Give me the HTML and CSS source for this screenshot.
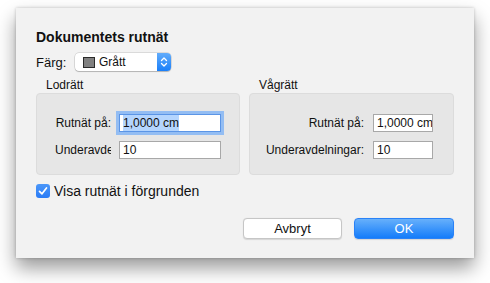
FILE: index.html
```html
<!DOCTYPE html>
<html lang="sv">
<head>
    <meta charset="UTF-8">
    <meta name="viewport" content="width=device-width, initial-scale=1.0">
    <title>Dokumentets rutnät</title>
    <link rel="stylesheet" href="styles.css">
</head>
<body>
    <div class="dialog">
        <h2 class="title">Dokumentets rutnät</h2>

        <!-- Färgval -->
        <div class="color-row">
            <span class="color-label">Färg:</span>
            <div class="popup">
                <span class="swatch"></span>
                <span class="popup-text">Grått</span>
                <span class="stepper">
                    <svg width="8" height="12" viewBox="0 0 8 12">
                        <path d="M1.5 4.5 L4 2 L6.5 4.5 M1.5 7.5 L4 10 L6.5 7.5" fill="none" stroke="#fff" stroke-width="1.3" stroke-linecap="round" stroke-linejoin="round"/>
                    </svg>
                </span>
            </div>
        </div>

        <!-- Grupper -->
        <div class="groups">
            <div class="group">
                <div class="group-title">Lodrätt</div>
                <div class="group-box left">
                    <span class="field-label">Rutnät på:</span>
                    <div class="field focus"><span class="sel">1,0000 cm</span></div>
                    <span class="field-label">Underavdelningar:</span>
                    <div class="field">10</div>
                </div>
            </div>
            <div class="group">
                <div class="group-title">Vågrätt</div>
                <div class="group-box right">
                    <span class="field-label">Rutnät på:</span>
                    <div class="field">1,0000 cm</div>
                    <span class="field-label">Underavdelningar:</span>
                    <div class="field">10</div>
                </div>
            </div>
        </div>

        <div class="check-row">
            <span class="checkbox">
                <svg width="14" height="14" viewBox="0 0 14 14">
                    <path d="M3.5 7.3 L6 9.8 L10.5 4" fill="none" stroke="#fff" stroke-width="1.7" stroke-linecap="round" stroke-linejoin="round"/>
                </svg>
            </span>
            <span class="check-text">Visa rutnät i förgrunden</span>
        </div>

        <div class="buttons">
            <button class="btn">Avbryt</button>
            <button class="btn primary">OK</button>
        </div>
    </div>
</body>
</html>
```

FILE: styles.css
```css
body {
    margin: 0;
    padding: 8px 0 30px 16px;
    background-color: #fff;
    font-family: "Liberation Sans", Arial, sans-serif;
    color: #111;
}
.dialog {
    box-sizing: border-box;
    width: 458px;
    height: 250px;
    padding: 21px 20px 19px 20px;
    background-color: #f2f2f2;
    box-shadow: 0 10px 18px rgba(0, 0, 0, 0.4), 0 0 3px rgba(0, 0, 0, 0.22);
}
.title {
    margin: 0;
    font-size: 14px;
    line-height: 17px;
    font-weight: bold;
}
.color-row {
    display: flex;
    align-items: center;
    margin-top: 7px;
    height: 18px;
}
.color-label {
    font-size: 13px;
    width: 39px;
}
.popup {
    display: flex;
    align-items: center;
    box-sizing: border-box;
    width: 96px;
    height: 18px;
    background-color: #fff;
    border-radius: 4px;
    box-shadow: 0 0 0 0.5px rgba(0, 0, 0, 0.2), 0 1px 1px rgba(0, 0, 0, 0.18);
}
.swatch {
    box-sizing: border-box;
    width: 12px;
    height: 11px;
    margin-left: 8px;
    background-color: #808080;
    border: 1px solid #2a2a2a;
}
.popup-text {
    font-size: 12px;
    margin-left: 4px;
    flex: 1;
}
.stepper {
    display: flex;
    align-items: center;
    justify-content: center;
    width: 14px;
    height: 18px;
    border-radius: 0 4px 4px 0;
    background: linear-gradient(#62acfb, #1a7ff9);
}
.groups {
    display: grid;
    grid-template-columns: 204px 205px;
    column-gap: 9px;
    margin-top: 7px;
}
.group-title {
    font-size: 12px;
    line-height: 15px;
    padding-left: 10px;
}
.group-box {
    box-sizing: border-box;
    height: 82px;
    background-color: #e6e6e6;
    border: 1px solid #dcdcdc;
    border-radius: 4px;
    display: grid;
    align-content: start;
    align-items: center;
    row-gap: 9px;
    padding-top: 20px;
}
.group-box.left {
    grid-template-columns: 56px 102px;
    column-gap: 8px;
    padding-left: 18px;
}
.group-box.right {
    grid-template-columns: auto 60px;
    column-gap: 9px;
    justify-content: end;
    padding-right: 20px;
}
.field-label {
    font-size: 12px;
    line-height: 18px;
    text-align: right;
    white-space: nowrap;
    overflow: hidden;
}
.field {
    box-sizing: border-box;
    height: 18px;
    padding-left: 3px;
    background-color: #fff;
    border: 1px solid #a8a8a8;
    font-size: 12px;
    line-height: 16px;
    white-space: nowrap;
    overflow: hidden;
}
.field.focus {
    border-color: #5b95e6;
    box-shadow: 0 0 0 3px #93bdf3;
}
.sel {
    background-color: #b4d5fe;
    padding: 1px 0;
}
.check-row {
    display: flex;
    align-items: center;
    margin-top: 9px;
    height: 14px;
}
.checkbox {
    display: flex;
    width: 14px;
    height: 14px;
    border-radius: 3px;
    background: linear-gradient(#4b97f9, #2a7cf6);
}
.check-text {
    margin-left: 4px;
    font-size: 14px;
    line-height: 14px;
}
.buttons {
    display: flex;
    justify-content: flex-end;
    gap: 12px;
    margin-top: 20px;
}
.btn {
    box-sizing: border-box;
    width: 99px;
    height: 21px;
    padding: 0;
    font-family: "Liberation Sans", Arial, sans-serif;
    font-size: 13px;
    color: #111;
    background-color: #fff;
    border: 1px solid #c6c6c6;
    border-radius: 4px;
    box-shadow: 0 0.5px 1px rgba(0, 0, 0, 0.12);
}
.btn.primary {
    width: 100px;
    color: #fff;
    border-color: #2a82f7;
    background: linear-gradient(#67b0fb, #147cfa);
}
```
